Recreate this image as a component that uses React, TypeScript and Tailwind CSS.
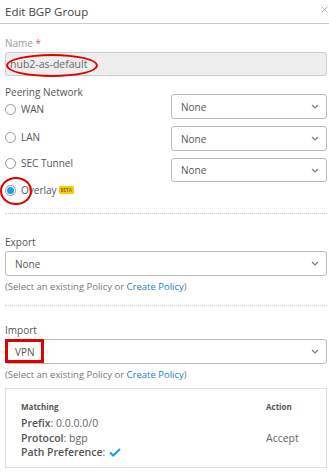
import React from "react";

function Chevron() {
  return (
    <svg width="8" height="5" viewBox="0 0 8 5" className="shrink-0">
      <path d="M1 1 L4 4 L7 1" fill="none" stroke="#777" strokeWidth="1.1" />
    </svg>
  );
}

function Select({ value, className = "" }: { value: string; className?: string }) {
  return (
    <div className={`flex items-center justify-between rounded-[3px] border border-[#bbb] bg-white pl-[9px] pr-[7px] ${className}`}>
      <span className="text-[10px] leading-[14px] text-[#555]">{value}</span>
      <Chevron />
    </div>
  );
}

function Radio({ label, checked = false, extra }: { label: string; checked?: boolean; extra?: React.ReactNode }) {
  return (
    <div className="flex items-center">
      <span className="flex h-[11px] w-[11px] items-center justify-center rounded-full border border-[#999] bg-white">
        {checked && <span className="h-[7px] w-[7px] rounded-full bg-[#1a9cf0]" />}
      </span>
      <span className="ml-[5px] text-[10px] leading-[14px] text-[#555]">{label}</span>
      {extra}
    </div>
  );
}

function Helper() {
  return (
    <div className="text-[9.5px] leading-[14px] text-[#777]">
      (Select an existing Policy or <span className="text-[#1a7cc8]">Create Policy</span>)
    </div>
  );
}

export default function App() {
  return (
    <div className="h-[474px] w-[329px] overflow-hidden bg-white text-[#555]" style={{ fontFamily: '"Open Sans", sans-serif' }}>
      <div className="relative flex h-[24px] items-center border-b border-[#c8c8c8] pl-[5px]">
        <span className="text-[11.5px] font-medium text-[#444]">Edit BGP Group</span>
        <svg width="7" height="7" viewBox="0 0 7 7" className="absolute right-[1px] top-[6px]">
          <path d="M0.5 0.5 L6.5 6.5 M6.5 0.5 L0.5 6.5" stroke="#aaa" strokeWidth="0.9" />
        </svg>
      </div>
      <div className="pl-[5px] pr-[2px]">
        <div className="mt-[12px] text-[10px] leading-[14px] text-[#999]">
          Name <span className="text-[#e06060]">*</span>
        </div>
        <div className="relative mt-[2px] flex h-[24px] items-center rounded-[3px] border border-[#ccc] bg-[#eee] pl-[4px]">
          <span className="text-[10.5px] leading-[14px] text-[#666]">hub2-as-default</span>
          <span className="absolute left-[0px] top-[1px] h-[23px] w-[92px] rounded-[50%] border-[2px] border-[#e00000]" />
        </div>

        <div className="mt-[9px] flex">
          <div className="flex w-[166px] flex-col">
            <div className="text-[10px] leading-[14px] text-[#555]">Peering Network</div>
            <div className="flex h-[20px] items-center"><Radio label="WAN" /></div>
            <div className="mt-[8px] flex h-[20px] items-center"><Radio label="LAN" /></div>
            <div className="mt-[6px] flex h-[20px] items-center"><Radio label="SEC Tunnel" /></div>
            <div className="relative mt-[7px] flex h-[20px] items-center">
              <Radio
                label="Overlay"
                checked
                extra={
                  <span className="ml-[2px] rounded-[1px] bg-[#f5cf00] px-[2px] text-[4.5px] font-bold leading-[8px] text-[#9a6a00]">BETA</span>
                }
              />
              <span className="absolute left-[-5px] top-[-3px] h-[28px] w-[32px] rounded-[50%] border-[2px] border-[#e00000]" />
            </div>
          </div>
          <div className="flex flex-1 flex-col">
            <Select value="None" className="mt-[9px] h-[25px]" />
            <Select value="None" className="mt-[7px] h-[25px]" />
            <Select value="None" className="mt-[7px] h-[24px]" />
          </div>
        </div>

        <div className="mt-[13px] border-t border-dotted border-[#ccc]" />

        <div className="mt-[21px] text-[10px] leading-[14px] text-[#555]">Export</div>
        <Select value="None" className="mt-[2px] h-[25px]" />
        <div className="mt-[4px]"><Helper /></div>

        <div className="mt-[11px] border-t border-dotted border-[#ccc]" />

        <div className="mt-[17px] text-[10px] leading-[14px] text-[#555]">Import</div>
        <div className="relative mt-[2px]">
          <Select value="VPN" className="h-[25px]" />
          <span className="absolute left-[0px] top-[0px] h-[24px] w-[39px] border-[3px] border-[#e00000]" />
        </div>
        <div className="mt-[4px]"><Helper /></div>

        <div className="mt-[6px] h-[80px] border border-[#ddd] pl-[15px] pt-[12px]">
          <div className="flex">
            <div className="w-[245px]">
              <div className="text-[8px] font-bold leading-[12px] text-[#555]">Matching</div>
              <div className="mt-[3px] text-[10.5px] leading-[14.5px] text-[#666]"><span className="font-semibold text-[#555]">Prefix</span>: 0.0.0.0/0</div>
              <div className="text-[10.5px] leading-[14.5px] text-[#666]"><span className="font-semibold text-[#555]">Protocol</span>: bgp</div>
              <div className="flex items-center text-[10.5px] leading-[14.5px] text-[#666]">
                <span className="font-semibold text-[#555]">Path Preference</span>:
                <svg width="12" height="9" viewBox="0 0 12 9" className="ml-[4px]">
                  <path d="M1 4.5 L4.2 7.5 L11 1" fill="none" stroke="#1a9cf0" strokeWidth="2" />
                </svg>
              </div>
            </div>
            <div>
              <div className="text-[8px] font-bold leading-[12px] text-[#555]">Action</div>
              <div className="mt-[17.5px] text-[10.5px] leading-[14.5px] text-[#666]">Accept</div>
            </div>
          </div>
        </div>
      </div>
    </div>
  );
}
